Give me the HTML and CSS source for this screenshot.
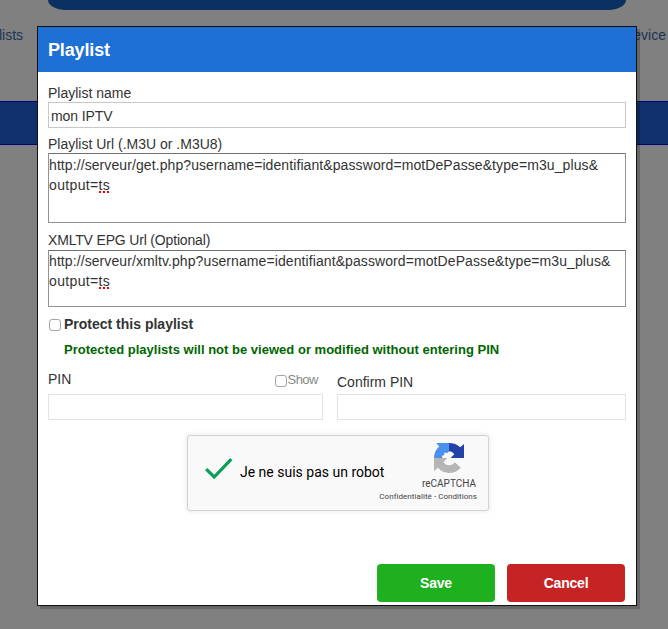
FILE: index.html
```html
<!DOCTYPE html>
<html lang="en">
<head>
<meta charset="utf-8">
<title>Playlist</title>
<link rel="stylesheet" href="styles.css">
</head>
<body>
<div class="page">
  <div class="hero"></div>
  <nav class="links"><span class="link-left">lists</span><span>Device</span></nav>
  <div class="band"></div>
</div>
<section class="modal">
  <header class="modal-head">Playlist</header>
  <div class="modal-body">
    <label class="label name-label">Playlist name</label>
    <div class="input name-input">mon IPTV</div>
    <label class="label url-label">Playlist Url (.M3U or .M3U8)</label>
    <div class="area area-url"><span class="url-text">http://serveur/get.php?username=identifiant&amp;password=motDePasse&amp;type=m3u_plus&amp;</span><br><span class="url-rest">output=<span class="misspelt">ts</span></span></div>
    <label class="label epg-label">XMLTV EPG Url (Optional)</label>
    <div class="area area-epg"><span class="url-text">http://serveur/xmltv.php?username=identifiant&amp;password=motDePasse&amp;type=m3u_plus&amp;</span><br><span class="url-rest">output=<span class="misspelt">ts</span></span></div>
    <div class="protect"><span class="check"></span><b>Protect this playlist</b></div>
    <div class="notice">Protected playlists will not be viewed or modified without entering PIN</div>
    <div class="pins">
      <div class="pin">
        <div class="pin-head"><span>PIN</span><span class="show"><span class="check"></span><span class="show-text">Show</span></span></div>
        <div class="pin-input"></div>
      </div>
      <div class="confirm">
        <div class="pin-head confirm-head">Confirm PIN</div>
        <div class="pin-input"></div>
      </div>
    </div>
    <div class="captcha">
      <svg class="tick" width="30" height="24" viewBox="0 0 30 24"><path d="M2.2 12.2 10.2 20 27.3 2.2" fill="none" stroke="#0a9d58" stroke-width="3.2"/></svg>
      <span class="robot">Je ne suis pas un robot</span>
      <div class="brand">
        <svg class="logo" width="30" height="30" viewBox="0 0 30 30">
          <path fill="#4a90ee" d="M15 0H2.200L5.300 3.600C2 6.500 0 10.500 0 15H8.500L7.800 12.800 10 12.300 10.800 9.200 13 10.300 15 8.500Z"/>
          <path fill="#2142a8" d="M15 0C19.400 0 23.300 1.500 26.200 4.300L30 1V15H16.500L20.300 11.200C19 9.400 17.200 8.300 15 8.200Z"/>
          <path fill="#b5b5b5" d="M0 15V28L4 24.800C7 28.200 11 30 15 30C19.700 30 23.800 28.300 26.700 24.800L20.900 19.300C19.500 21.200 17.500 22.300 15.200 22.300C12.700 22.300 10.700 21.100 9.400 19.300L13.300 15Z"/>
        </svg>
        <span class="brand-name">reCAPTCHA</span>
        <span class="brand-links">Confidentialité - Conditions</span>
      </div>
    </div>
    <div class="actions"><button class="btn save">Save</button><button class="btn cancel">Cancel</button></div>
  </div>
</section>
</body>
</html>
```
FILE: styles.css
```css
* { box-sizing: border-box; }
body {
  margin: 0;
  width: 668px;
  height: 629px;
  overflow: hidden;
  background: #808080;
  color: #333;
  font: 14px/20px "Liberation Sans", Arial, sans-serif;
}
.hero {
  width: 578px;
  height: 10px;
  margin-left: 48px;
  background: #0a3161;
  border-radius: 0 0 18px 18px / 0 0 10px 10px;
}
.links {
  display: flex;
  justify-content: space-between;
  height: 91px;
  padding: 15px 2px 0 0;
  color: #1a3454;
}
.link-left { margin-left: -1px; }
.band {
  height: 44px;
  background: #10306e;
  border: solid #00007a;
  border-width: 1px 0;
}
.modal {
  position: absolute;
  left: 37px;
  top: 26px;
  width: 600px;
  height: 580px;
  background: #fff;
  border: 1px solid #111;
  box-shadow: 3px 3px 0 rgba(0, 0, 0, .2);
}
.modal-head {
  height: 45px;
  padding-left: 10px;
  background: #1e70d5;
  color: #fff;
  font-size: 18px;
  font-weight: bold;
  letter-spacing: -.15px;
  line-height: 46px;
}
.modal-body {
  display: flex;
  flex-direction: column;
  padding: 11px 10px 0;
}
.label { height: 20px; line-height: 20px; }
.name-label { height: 19px; }
.input {
  height: 26px;
  padding-left: 2px;
  border: 1px solid #c8c8c8;
  letter-spacing: -.1px;
  line-height: 26px;
}
.url-label { margin-top: 5px; line-height: 22px; }
.epg-label { margin-top: 7px; letter-spacing: -.17px; }
.area {
  border: 1px solid #929292;
  border-top-color: #707070;
  letter-spacing: .09px;
  white-space: nowrap;
}
.url-rest { letter-spacing: .35px; }
.area-url { height: 70px; padding-top: 1px; }
.area-epg { height: 57px; }
.misspelt {
  background: repeating-linear-gradient(90deg, #f00 0 2px, transparent 2px 4px) bottom / 100% 2px no-repeat;
}
.check {
  width: 12px;
  height: 12px;
  flex: none;
  border: 1px solid #a5a5a5;
  border-radius: 3px;
}
.protect {
  display: flex;
  align-items: center;
  gap: 3px;
  height: 20px;
  margin-top: 7px;
  padding-left: 1px;
}
.protect .check { margin-top: 2px; }
.notice {
  height: 20px;
  margin-top: 5px;
  padding-left: 16px;
  color: #060;
  font-size: 13px;
  font-weight: bold;
  letter-spacing: .015px;
  line-height: 22px;
  white-space: nowrap;
}
.pins { display: flex; gap: 14px; margin-top: 10px; }
.pin { width: 275px; }
.confirm { width: 289px; }
.pin-head {
  display: flex;
  justify-content: space-between;
  height: 25px;
}
.confirm-head { padding-top: 3px; }
.show {
  display: flex;
  align-items: center;
  height: 20px;
  padding-right: 5px;
}
.show .check { margin-top: 4px; }
.show-text { color: #888; font-size: 13px; letter-spacing: -.5px; margin-top: 2px; }
.pin-input { height: 26px; border: 1px solid #e2e2e2; }
.captcha {
  display: flex;
  width: 302px;
  height: 76px;
  margin: 15px 0 0 139px;
  padding: 7px 11px 0 16px;
  background: #f9f9f9;
  border: 1px solid #d3d3d3;
  border-radius: 3px;
  box-shadow: 0 0 4px 1px rgba(0, 0, 0, .08);
  color: #000;
  font-family: Roboto, sans-serif;
}
.tick { flex: none; margin-top: 14px; }
.robot { flex: none; margin: 19px 0 0 6px; white-space: nowrap; }
.brand {
  display: flex;
  flex: 1;
  flex-direction: column;
  align-items: flex-end;
  min-width: 0;
  color: #444;
  white-space: nowrap;
}
.logo { margin-right: 13px; }
.brand-name { height: 18px; font-size: 10px; line-height: 22px; margin-right: 1px; }
.brand-links { font-size: 8px; letter-spacing: .05px; line-height: 12px; }
.actions {
  display: flex;
  justify-content: flex-end;
  gap: 12px;
  margin: 53px 1px 0 0;
}
.btn {
  width: 118px;
  height: 38px;
  padding: 0;
  border: 0;
  border-radius: 4px;
  color: #fff;
  font: bold 14px/38px "Liberation Sans", Arial, sans-serif;
  letter-spacing: -.2px;
}
.save { background: #1eb01e; }
.cancel { background: #c62424; }
```
